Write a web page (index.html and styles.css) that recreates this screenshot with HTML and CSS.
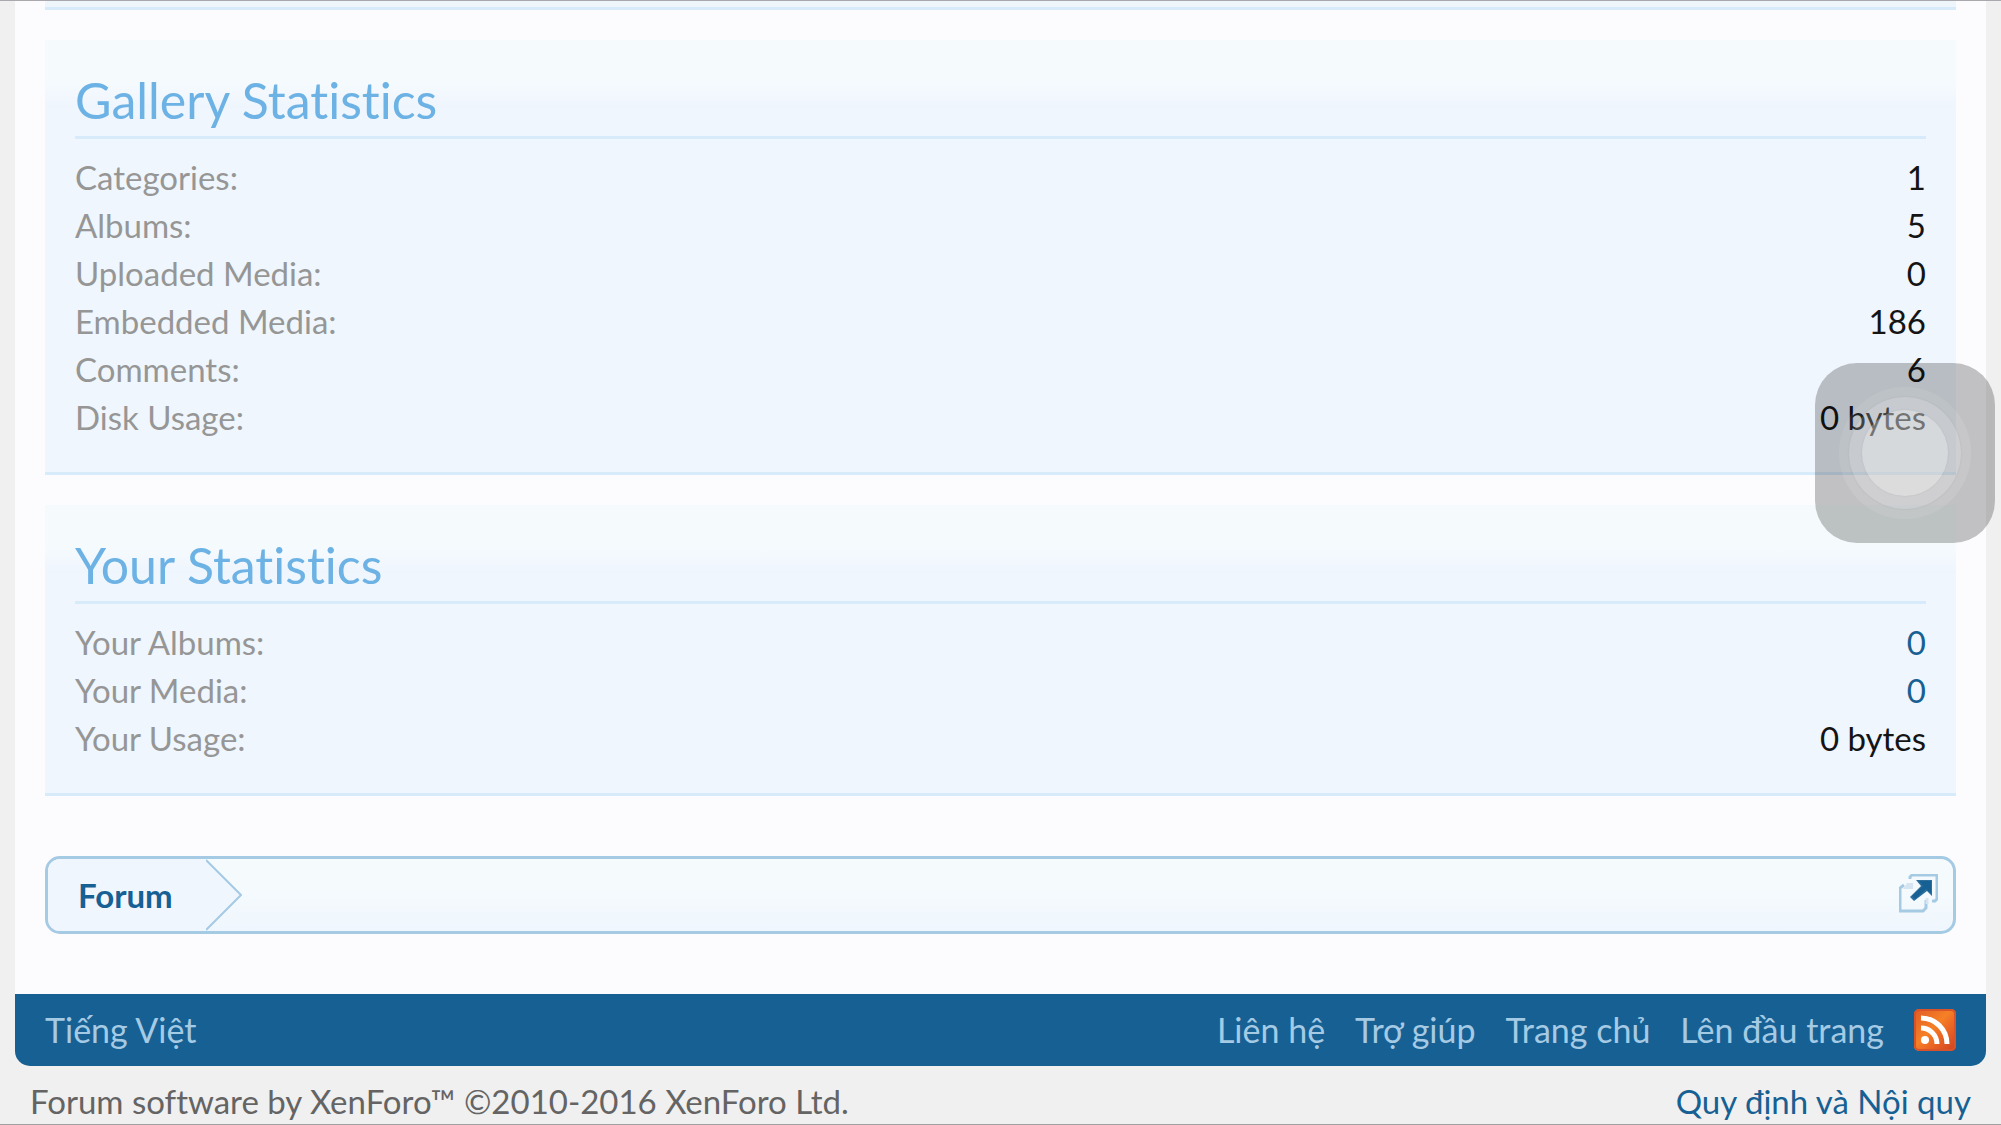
FILE: index.html
```html
<!DOCTYPE html>
<html lang="vi">
<head>
    <meta charset="UTF-8">
    <meta name="viewport" content="width=device-width, initial-scale=1.0">
    <title>Gallery</title>
    <link rel="stylesheet" href="styles.css">
</head>
<body>
    <main class="content">
        <div class="section section-end"></div>

        <section class="section">
            <h3>Gallery Statistics</h3>
            <dl class="stats">
                <div><dt>Categories:</dt><dd>1</dd></div>
                <div><dt>Albums:</dt><dd>5</dd></div>
                <div><dt>Uploaded Media:</dt><dd>0</dd></div>
                <div><dt>Embedded Media:</dt><dd>186</dd></div>
                <div><dt>Comments:</dt><dd>6</dd></div>
                <div><dt>Disk Usage:</dt><dd>0 bytes</dd></div>
            </dl>
        </section>

        <section class="section">
            <h3>Your Statistics</h3>
            <dl class="stats">
                <div><dt>Your Albums:</dt><dd><a href="#albums">0</a></dd></div>
                <div><dt>Your Media:</dt><dd><a href="#media">0</a></dd></div>
                <div><dt>Your Usage:</dt><dd>0 bytes</dd></div>
            </dl>
        </section>

        <nav class="breadcrumb">
            <a class="crumb" href="#forum">Forum</a>
            <svg class="arrow" viewBox="0 0 36 72" aria-hidden="true">
                <path d="M0 0V72L35 36Z" fill="#eff6fd"/>
                <path d="M0 1L35 36L0 71" fill="none" stroke="#a5cae4" stroke-width="2"/>
            </svg>
            <button class="jump" type="button" aria-label="Open quick navigation">
                <svg viewBox="0 0 39 39" aria-hidden="true">
                    <path d="M11 5V3L13 1H38V25L36 27H33" fill="none" stroke="#a5cae4" stroke-width="3"/>
                    <path d="M13 3H36V24H13Z" fill="#f3f9fd"/>
                    <path d="M5 11L1 14V37H24L27 34V26" fill="none" stroke="#a5cae4" stroke-width="3"/>
                    <path d="M4 15H14V9H8Z" fill="#d5e6f2"/>
                    <path d="M28 24V30" stroke="#d5e6f2" stroke-width="3"/>
                    <path d="M17 6H33V22L28 17L15 27L11 23L22 12Z" fill="#2a6f9d"/>
                    <path d="M20 7H32V19L27 15L16 25L13 22L24 12Z" fill="#176093"/>
                </svg>
            </button>
        </nav>
    </main>

    <footer>
        <div class="footer-bar">
            <a href="#language">Tiếng Việt</a>
            <nav class="footer-links">
                <a href="#contact">Liên hệ</a>
                <a href="#help">Trợ giúp</a>
                <a href="#home">Trang chủ</a>
                <a href="#top">Lên đầu trang</a>
                <a class="rss" href="#rss" aria-label="RSS">
                    <svg viewBox="0 0 42 42" aria-hidden="true">
                        <defs>
                            <linearGradient id="rssFill" x1="0" y1="0" x2="1" y2="1">
                                <stop offset="0" stop-color="#e15a24"/>
                                <stop offset="0.45" stop-color="#f58026"/>
                                <stop offset="0.6" stop-color="#ee6b25"/>
                                <stop offset="1" stop-color="#cf4022"/>
                            </linearGradient>
                        </defs>
                        <rect width="42" height="42" rx="5" fill="url(#rssFill)"/>
                        <rect x="1" y="1" width="40" height="40" rx="4" fill="none" stroke="#d9532a" stroke-width="2"/>
                        <circle cx="11" cy="31" r="4" fill="#fff"/>
                        <path d="M7 19A16 16 0 0 1 23 35M7 9A26 26 0 0 1 33 35" fill="none" stroke="#fff" stroke-width="5"/>
                    </svg>
                </a>
            </nav>
        </div>
        <div class="legal">
            <span>Forum software by XenForo™ ©2010-2016 XenForo Ltd.</span>
            <a href="#rules">Quy định và Nội quy</a>
        </div>
    </footer>

    <!-- Floating touch button -->
    <button class="touch" type="button" aria-label="Touch menu">
        <span class="ring"><span class="ring-mid"><span class="ring-dot"></span></span></span>
    </button>
</body>
</html>
```
FILE: styles.css
```css
* {
    box-sizing: border-box;
}

body {
    margin: 0;
    min-height: 100vh;
    font-family: 'Trebuchet MS', Lato, 'Noto Sans', sans-serif;
    font-size: 33px;
    line-height: 48px;
    font-variant-ligatures: none;
    color: #141414;
    background-color: #f0f0f0;
    border-top: 1px solid #a9a9ad;
    border-bottom: 1px solid #a0a0a0;
}

a {
    color: #176093;
    text-decoration: none;
}

button {
    padding: 0;
    border: none;
    background: none;
    cursor: pointer;
}

svg {
    display: block;
}

.content {
    margin: 0 15px;
    padding: 0 30px 60px;
    background-color: #fcfcff;
}

/* Statistic blocks */
.section {
    margin-bottom: 30px;
    padding: 30px 30px 31px;
    background: #eff6fd linear-gradient(#f5fbfd, #f5fbfd 40px, #eff5fd 68px) no-repeat 0 0 / 100% 68px;
    border-bottom: 3px solid #d7ebfa;
}

.section-end {
    height: 9px;
    padding: 0;
    background: #eff6fb;
}

.section h3 {
    margin: 0 0 14px;
    padding-bottom: 6px;
    font-size: 50px;
    line-height: 60px;
    font-weight: normal;
    color: #6cb2e4;
    border-bottom: 3px solid #d7ebfa;
}

.stats {
    margin: 0;
}

.stats div {
    display: flex;
    justify-content: space-between;
}

.stats dt {
    color: #969696;
}

.stats dd {
    margin: 0;
}

/* Breadcrumb */
.breadcrumb {
    display: flex;
    align-items: center;
    margin-top: 60px;
    overflow: hidden;
    background: linear-gradient(#f5fbfd 40%, #eff6fd);
    border: 3px solid #a5cae4;
    border-radius: 15px;
}

.crumb {
    padding: 0 33px 0 30px;
    line-height: 72px;
    font-weight: bold;
    background-color: #eff6fd;
}

.arrow {
    width: 36px;
    height: 72px;
}

.jump {
    align-self: flex-start;
    margin: 15px 15px 0 auto;
}

.jump svg {
    width: 39px;
    height: 39px;
}

/* Footer */
.footer-bar {
    display: flex;
    justify-content: space-between;
    margin: 0 15px;
    padding: 0 30px;
    font-size: 34px;
    line-height: 72px;
    background-color: #176093;
    border-radius: 0 0 15px 15px;
}

.footer-bar a {
    color: #a5cae4;
}

.footer-links {
    display: flex;
    align-items: center;
    gap: 30px;
}

.rss svg {
    width: 42px;
    height: 42px;
}

.legal {
    display: flex;
    justify-content: space-between;
    padding: 12px 30px 0;
    line-height: 46px;
    color: #646464;
}

/* Floating touch button */
.touch {
    position: fixed;
    top: 363px;
    right: 6px;
    display: flex;
    align-items: center;
    justify-content: center;
    width: 180px;
    height: 180px;
    background-color: rgba(0, 0, 0, 0.23);
    border-radius: 42px;
}

.ring,
.ring-mid,
.ring-dot {
    display: flex;
    align-items: center;
    justify-content: center;
    border-radius: 50%;
}

.ring {
    width: 132px;
    height: 132px;
    background-color: rgba(255, 255, 255, 0.08);
}

.ring-mid {
    width: 112px;
    height: 112px;
    background-color: rgba(255, 255, 255, 0.14);
    box-shadow: 0 0 2px rgba(0, 0, 0, 0.1);
}

.ring-dot {
    width: 86px;
    height: 86px;
    background-color: rgba(255, 255, 255, 0.27);
    box-shadow: 0 0 2px rgba(0, 0, 0, 0.1);
}
```
